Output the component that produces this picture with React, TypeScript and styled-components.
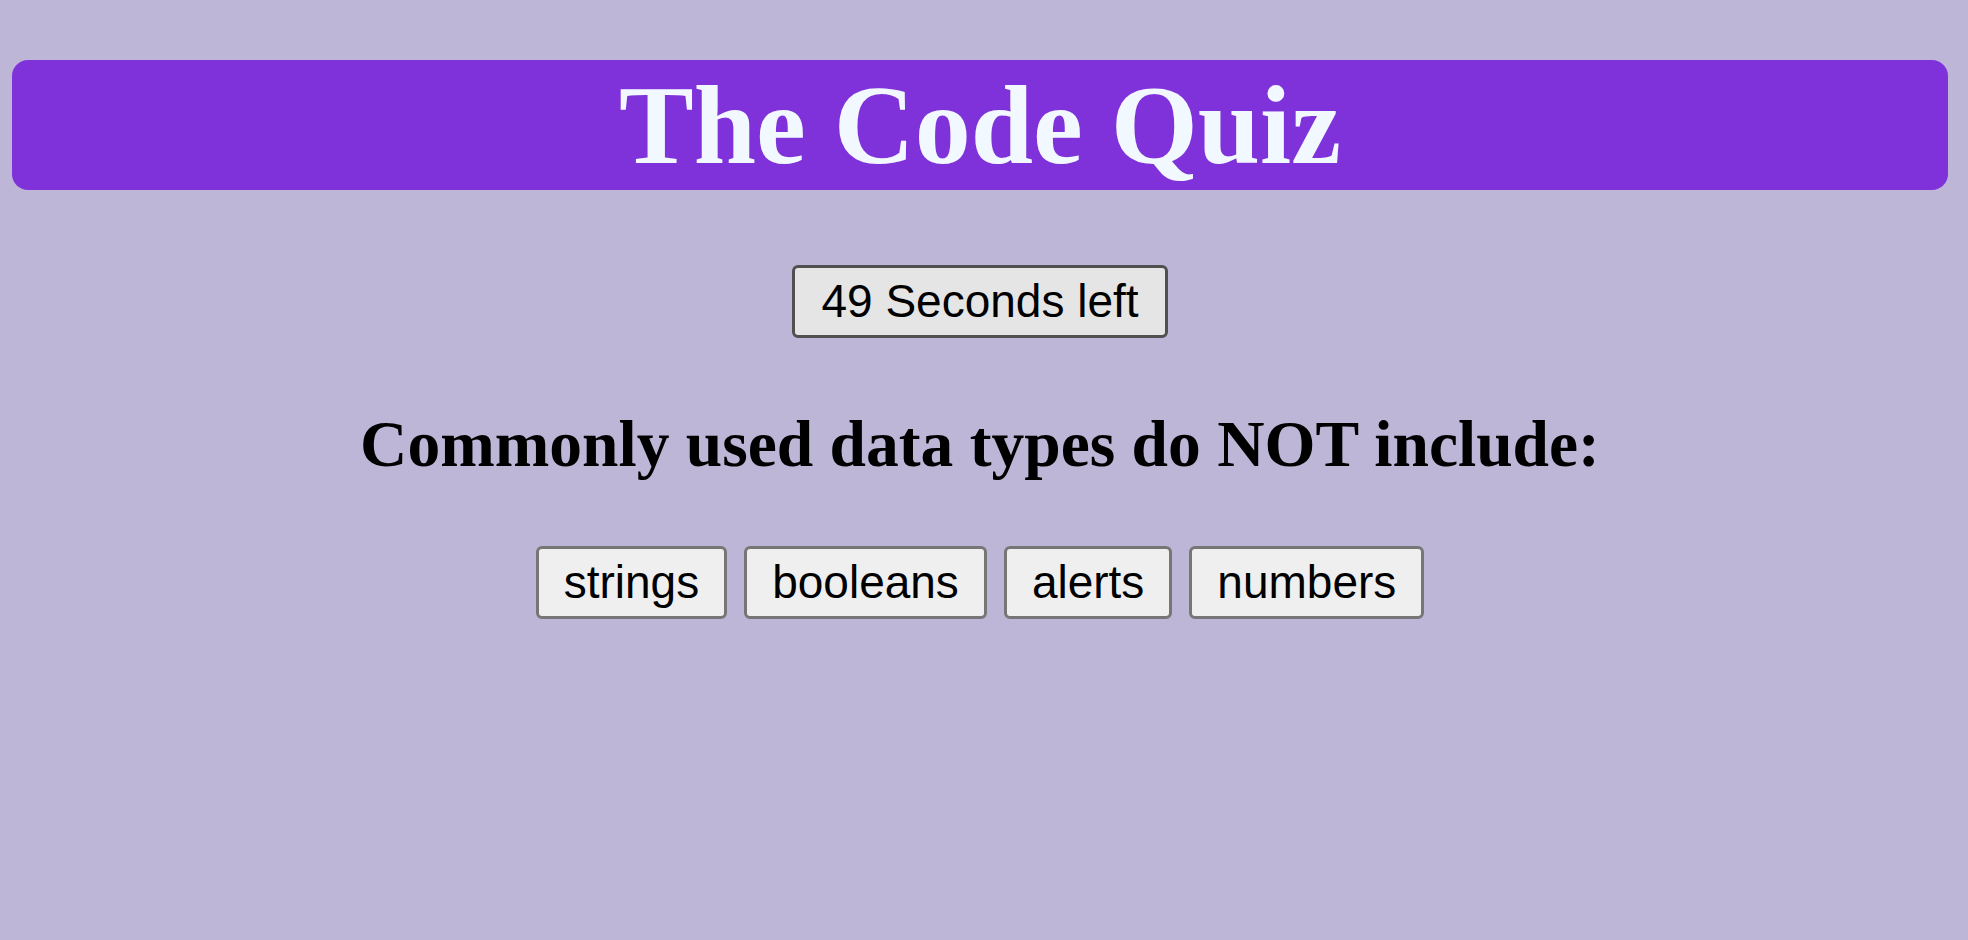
import React from "react";
import styled, { createGlobalStyle } from "styled-components";

const GlobalStyle = createGlobalStyle`
  html, body {
    margin: 0;
    padding: 0;
    background: #bdb6d7;
  }
  body {
    min-height: 940px;
    font-family: "Liberation Serif", "Times New Roman", serif;
  }
`;

const Page = styled.main`
  padding: 60px 20px 0 12px;
  display: flex;
  flex-direction: column;
  align-items: stretch;
`;

const Header = styled.header`
  height: 130px;
  background: #7f32d9;
  border-radius: 16px;
  display: flex;
  justify-content: center;
`;

const Title = styled.h1`
  margin: 0;
  font-family: "Liberation Serif", "Times New Roman", serif;
  font-weight: 700;
  font-size: 112px;
  line-height: 130px;
  color: #f2f8ff;
`;

const Timer = styled.div`
  display: flex;
  justify-content: center;
  margin-top: 75px;
`;

const Button = styled.button<{ $tone?: "timer" | "answer" }>`
  box-sizing: border-box;
  height: 73px;
  margin: 0;
  padding: ${(p) => (p.$tone === "timer" ? "0 26px" : "0 25px")};
  font-family: "Liberation Sans", Arial, sans-serif;
  font-size: 46px;
  line-height: 67px;
  color: #000;
  background: ${(p) => (p.$tone === "timer" ? "#e5e5e5" : "#efefef")};
  border: 3px solid ${(p) => (p.$tone === "timer" ? "#505050" : "#767676")};
  border-radius: 6px;
  cursor: pointer;
`;

const Question = styled.h2`
  margin: 69px 0 0;
  text-align: center;
  font-family: "Liberation Serif", "Times New Roman", serif;
  font-weight: 700;
  font-size: 65.5px;
  line-height: normal;
  color: #000;
`;

const Answers = styled.div`
  display: flex;
  justify-content: center;
  gap: 17px;
  margin-top: 64px;
`;

const answers = ["strings", "booleans", "alerts", "numbers"];

export default function App() {
  return (
    <>
      <GlobalStyle />
      <Page>
        <Header>
          <Title>The Code Quiz</Title>
        </Header>
        <Timer>
          <Button $tone="timer">49 Seconds left</Button>
        </Timer>
        <Question>Commonly used data types do NOT include:</Question>
        <Answers>
          {answers.map((a) => (
            <Button key={a} $tone="answer">
              {a}
            </Button>
          ))}
        </Answers>
      </Page>
    </>
  );
}
